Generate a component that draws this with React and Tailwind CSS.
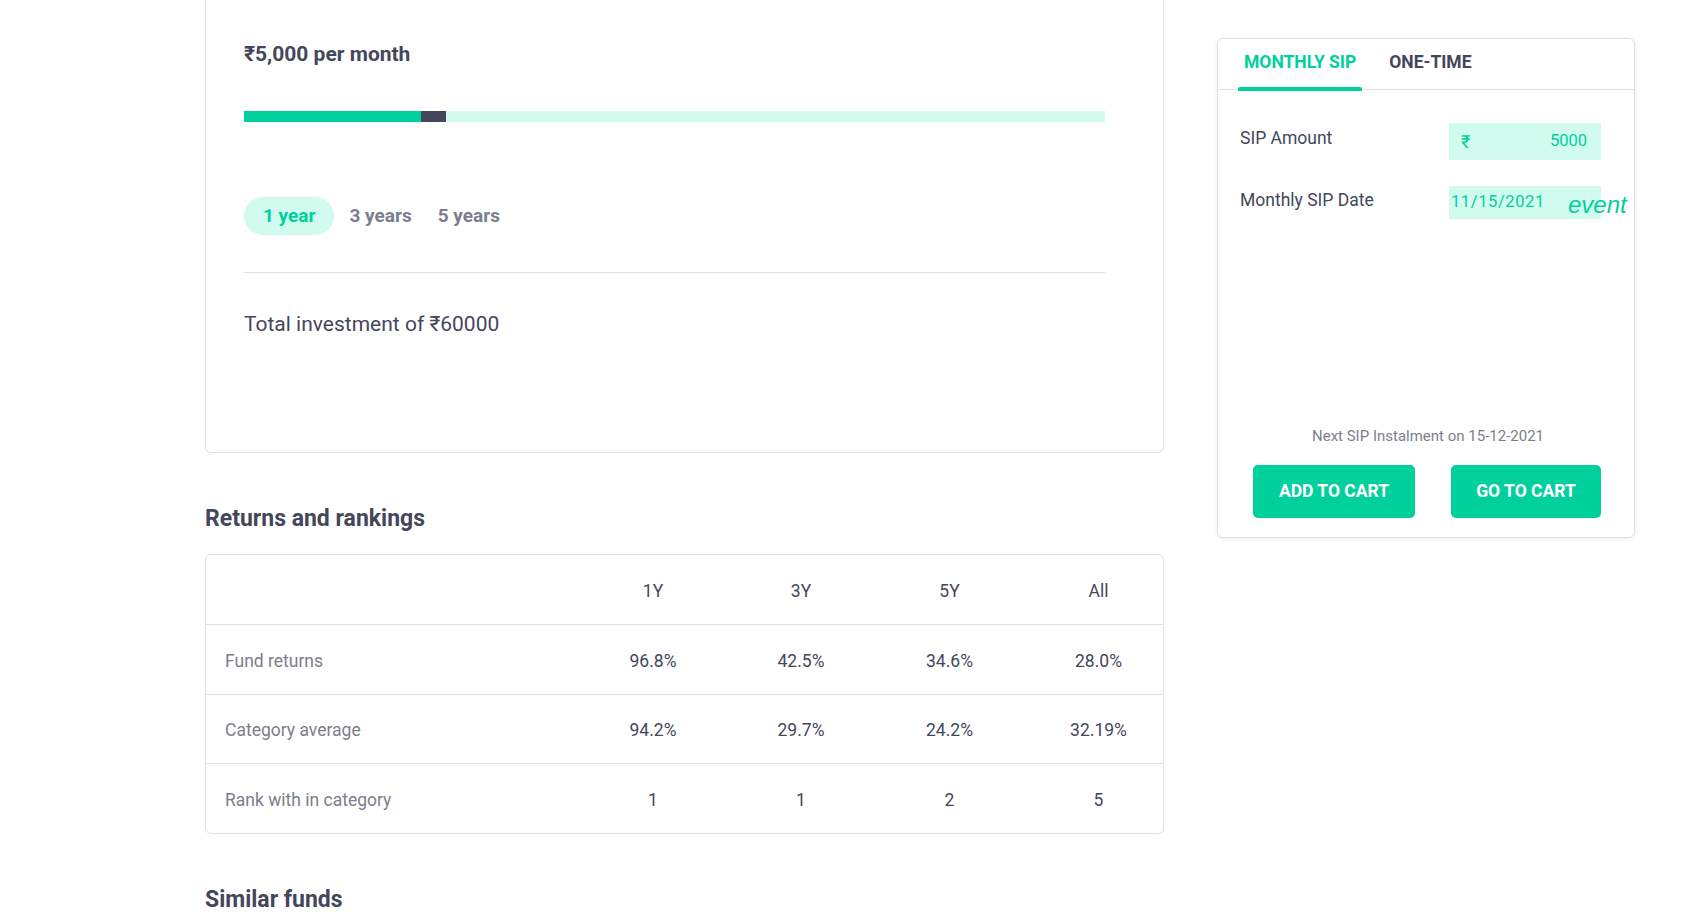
import React from 'react';

const rows = [
  { label: 'Fund returns', values: ['96.8%', '42.5%', '34.6%', '28.0%'] },
  { label: 'Category average', values: ['94.2%', '29.7%', '24.2%', '32.19%'] },
  { label: 'Rank with in category', values: ['1', '1', '2', '5'] },
];

export default function App() {
  return (
    <div className="min-h-[922px] bg-white font-['Roboto',sans-serif] text-[#44475b] overflow-hidden">
      <div className="flex items-start pl-[205px] gap-[53px]">
        {/* ── left column ── */}
        <div className="w-[959px] flex-shrink-0">
          {/* calculator card */}
          <div className="h-[453px] border-x border-b border-[#e0e0e0] rounded-b-[6px] pl-[38px] pr-[58px] pt-[40px]">
            <h3 className="text-[21px] leading-[28px] font-bold text-[#44475b]">₹5,000 per month</h3>

            <div className="mt-[43px] h-[11px] flex bg-[#d1fbef]">
              <div className="w-[177px] bg-[#00d09c]" />
              <div className="w-[25px] bg-[#44475b]" />
            </div>

            <div className="mt-[75px] flex items-center">
              <button className="h-[38px] rounded-full px-[19px] text-[19px] font-bold bg-[#d1fbef] text-[#00d09c]">1 year</button>
              <button className="ml-[15px] h-[38px] text-[19px] font-bold text-[#7c7e8c]">3 years</button>
              <button className="ml-[26px] h-[38px] text-[19px] font-bold text-[#7c7e8c]">5 years</button>
            </div>

            <div className="mt-[37px] border-t border-[#e0e0e0]" />

            <p className="mt-[37px] text-[21px] leading-[28px] text-[#44475b]">Total investment of ₹60000</p>
          </div>

          {/* returns and rankings */}
          <h2 className="mt-[51px] text-[23px] leading-[30px] font-bold text-[#44475b]">Returns and rankings</h2>

          <div className="mt-[20px] border border-[#e0e0e0] rounded-[6px] text-[17.5px]">
            <div className="grid grid-cols-[373px_148px_148px_149px_1fr] h-[69px] pt-[3px] items-center text-[#44475b]">
              <div />
              <div className="text-center">1Y</div>
              <div className="text-center">3Y</div>
              <div className="text-center">5Y</div>
              <div className="text-center pl-[10px]">All</div>
            </div>
            {rows.map((r) => (
              <div key={r.label} className="grid grid-cols-[373px_148px_148px_149px_1fr] h-[69.5px] pt-[3px] items-center border-t border-[#e0e0e0]">
                <div className="pl-[19px] text-[#7c7e8c]">{r.label}</div>
                {r.values.map((v, i) => (
                  <div key={i} className={`text-center text-[#44475b] ${i === 3 ? 'pl-[10px]' : ''}`}>{v}</div>
                ))}
              </div>
            ))}
          </div>

          <h2 className="mt-[51px] text-[23px] leading-[30px] font-bold text-[#44475b]">Similar funds</h2>
        </div>

        {/* ── right column ── */}
        <div className="mt-[38px] w-[418px] h-[500px] flex-shrink-0 border border-[#e0e0e0] rounded-[6px] shadow-[0_1px_4px_rgba(0,0,0,0.08)] flex flex-col">
          <div className="flex h-[51px] border-b border-[#e0e0e0] px-[20px] gap-[21px]">
            <div className="relative flex items-center pb-[3px] px-[6px] text-[17.5px] font-bold text-[#00d09c]">
              MONTHLY SIP
              <span className="absolute left-0 right-0 bottom-[-2px] h-[4px] rounded-t-[2px] bg-[#00d09c]" />
            </div>
            <div className="flex items-center pb-[3px] px-[6px] text-[17.5px] font-bold text-[#44475b]">ONE-TIME</div>
          </div>

          <div className="px-[22px] pr-[33px] pt-[33px]">
            <div className="flex items-start justify-between">
              <span className="mt-[2px] text-[17.5px] text-[#44475b]">SIP Amount</span>
              <div className="w-[152px] h-[37px] bg-[#d1fbef] flex items-center justify-between pl-[12px] pr-[14px] text-[#00d09c] text-[16.5px]">
                <span className="text-[18px]">₹</span>
                <span>5000</span>
              </div>
            </div>
            <div className="mt-[26px] flex items-start justify-between">
              <span className="mt-[1px] text-[17.5px] text-[#44475b]">Monthly SIP Date</span>
              <div className="relative w-[152px] h-[33px] bg-[#d1fbef] flex items-center pl-[2px] text-[#00d09c] text-[16.5px] tracking-[0.6px]">
                <span>11/15/2021</span>
                <span className="absolute left-[119px] top-[1px] text-[24px] italic font-['Liberation_Sans',sans-serif] tracking-normal">event</span>
              </div>
            </div>
          </div>

          <div className="mt-auto pb-[19px] flex flex-col items-center">
            <p className="text-[15px] text-[#7c7e8c] pl-[4px]">Next SIP Instalment on 15-12-2021</p>
            <div className="mt-[18px] flex gap-[36px] pl-[2px]">
              <button className="w-[162px] h-[53px] rounded-[5px] bg-[#00d09c] text-white text-[17.5px] font-bold">ADD TO CART</button>
              <button className="w-[150px] h-[53px] rounded-[5px] bg-[#00d09c] text-white text-[17.5px] font-bold">GO TO CART</button>
            </div>
          </div>
        </div>
      </div>
    </div>
  );
}
